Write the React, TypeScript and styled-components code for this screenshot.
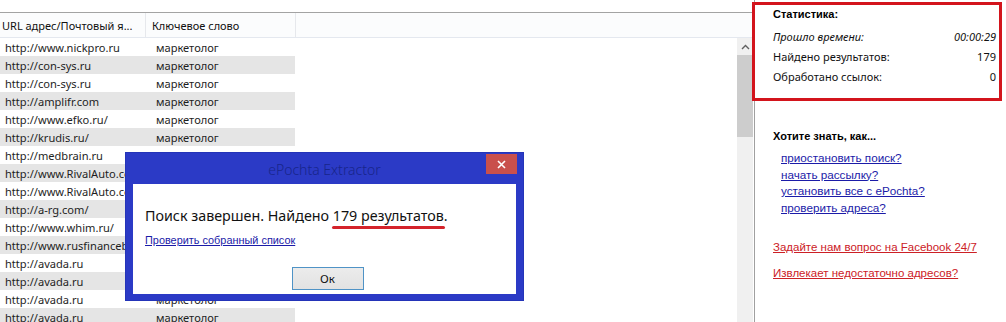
import styled, { createGlobalStyle } from 'styled-components';

const GlobalStyle = createGlobalStyle`
  html, body {
    margin: 0;
    padding: 0;
    background: #ffffff;
    overflow: hidden;
  }
`;

const Window = styled.div`
  position: relative;
  width: 1006px;
  height: 322px;
  display: flex;
  overflow: hidden;
  background: #ffffff;
  font-family: "Noto Sans", "Open Sans", sans-serif;
  color: #1e1e1e;
`;

// Левая часть: список найденных адресов
const ListPane = styled.div`
  width: 754px;
  flex: none;
  display: flex;
  flex-direction: column;
`;

const TopGap = styled.div`
  height: 12px;
  flex: none;
`;

const Grid = styled.div`
  flex: 1;
  display: flex;
  flex-direction: column;
  border-top: 1px solid #a3a3a3;
  margin-right: 1px;
  min-height: 0;
`;

const HeaderRow = styled.div`
  height: 24px;
  flex: none;
  display: flex;
  background: #fbfcfd;
  border-bottom: 1px solid #e4e8ef;
`;

const HeaderCell = styled.div<{ $w: number; $pad: number }>`
  width: ${(p) => p.$w}px;
  flex: none;
  box-sizing: border-box;
  padding-left: ${(p) => p.$pad}px;
  border-right: 1px solid #e6e8ec;
  display: flex;
  align-items: center;
  font-size: 11px;
  color: #111;
  white-space: nowrap;
  overflow: hidden;
`;

const Body = styled.div`
  flex: 1;
  display: flex;
  min-height: 0;
`;

const Rows = styled.div`
  flex: 1;
  overflow: hidden;
`;

const Row = styled.div<{ $shaded: boolean }>`
  width: 295px;
  height: 18px;
  display: flex;
  align-items: center;
  background: ${(p) => (p.$shaded ? '#e5e5e5' : 'transparent')};
  font-size: 11.1px;
`;

const Cell = styled.div<{ $w: number; $pad: number }>`
  width: ${(p) => p.$w}px;
  flex: none;
  box-sizing: border-box;
  padding-left: ${(p) => p.$pad}px;
  white-space: nowrap;
  overflow: hidden;
`;

const Scrollbar = styled.div`
  width: 16px;
  flex: none;
  background: #f0f0f0;
  display: flex;
  flex-direction: column;
`;

const ScrollArrow = styled.div`
  height: 17px;
  display: flex;
  align-items: center;
  justify-content: center;
`;

const ScrollThumb = styled.div`
  height: 82px;
  background: #cdcdcd;
`;

// Правая часть: статистика и подсказки
const SidePane = styled.div`
  flex: 1;
  border-left: 1px solid #a0a0a0;
  display: flex;
  flex-direction: column;
`;

const StatsBox = styled.div`
  margin: 2px 4px 0 -3px;
  height: 99px;
  box-sizing: border-box;
  border: 3px solid #d3141c;
  padding: 1px 3px 0 18px;
  display: flex;
  flex-direction: column;
`;

const Heading = styled.div<{ $top?: number }>`
  font-family: "Liberation Sans", Arial, sans-serif;
  font-weight: bold;
  font-size: 11px;
  color: #000;
  height: 16px;
  line-height: 16px;
  margin-top: ${(p) => p.$top ?? 0}px;
`;

const StatLine = styled.div<{ $italic?: boolean; $first?: boolean }>`
  display: flex;
  justify-content: space-between;
  height: 20px;
  line-height: 20px;
  margin-top: ${(p) => (p.$first ? 5 : 0)}px;
  font-size: 11px;
  color: #111;
  font-style: ${(p) => (p.$italic ? 'italic' : 'normal')};
`;

const HelpBlock = styled.div`
  padding-left: 18px;
  display: flex;
  flex-direction: column;
`;

const HelpList = styled.div`
  padding-left: 8px;
  margin-top: 6px;
  display: flex;
  flex-direction: column;
`;

const HelpLink = styled.a<{ $red?: boolean }>`
  font-family: "Liberation Sans", Arial, sans-serif;
  font-size: ${(p) => (p.$red ? 11.5 : 11.7)}px;
  height: 16.5px;
  line-height: 16px;
  color: ${(p) => (p.$red ? '#cc2026' : '#1b1ba8')};
  text-decoration: underline;
  cursor: pointer;
  white-space: nowrap;
`;

const RedLinks = styled.div`
  margin-top: 23px;
  display: flex;
  flex-direction: column;
  gap: 9px;
`;

// Диалог поверх списка
const Dialog = styled.div`
  position: absolute;
  left: 126px;
  top: 153px;
  width: 397px;
  height: 147px;
  box-sizing: border-box;
  background: #2b3ac6;
  padding: 0 7px 6px 7px;
  display: flex;
  flex-direction: column;
  box-shadow: 0 0 0 1px #2434b8;
`;

const TitleBar = styled.div`
  position: relative;
  height: 31px;
  flex: none;
  display: flex;
  align-items: center;
  justify-content: center;
  font-size: 14px;
  font-weight: 300;
  color: #18258a;
  padding-top: 1px;
  box-sizing: border-box;
`;

const CloseButton = styled.div`
  position: absolute;
  right: -1px;
  top: 1px;
  width: 31px;
  height: 20px;
  background: #c9504c;
  display: flex;
  align-items: center;
  justify-content: center;
`;

const ClientArea = styled.div`
  flex: 1;
  background: #ffffff;
  padding: 21px 12px 0 12px;
  display: flex;
  flex-direction: column;
`;

const Message = styled.div`
  font-size: 14.3px;
  color: #111;
  height: 22px;
  line-height: 22px;
  white-space: nowrap;
`;

const Marked = styled.span`
  position: relative;
  &::after {
    content: '';
    position: absolute;
    left: -1px;
    right: 3px;
    bottom: -4px;
    height: 3px;
    border-radius: 2px;
    background: #d4232b;
  }
`;

const DialogLink = styled.a`
  margin-top: 5px;
  font-family: "Liberation Sans", Arial, sans-serif;
  font-size: 10.9px;
  line-height: 16px;
  color: #1b1ba8;
  text-decoration: underline;
  cursor: pointer;
  align-self: flex-start;
`;

const ButtonRow = styled.div`
  margin-top: 19px;
  display: flex;
  justify-content: center;
  padding-left: 6px;
`;

const OkButton = styled.button`
  width: 72px;
  height: 23px;
  box-sizing: border-box;
  border: 1px solid #4f93c6;
  background: linear-gradient(#ececec, #e2e2e2);
  font-family: "Noto Sans", "Open Sans", sans-serif;
  font-size: 11.5px;
  color: #111;
  padding: 0;
`;

const urls = [
  'http://www.nickpro.ru',
  'http://con-sys.ru',
  'http://con-sys.ru',
  'http://amplifr.com',
  'http://www.efko.ru/',
  'http://krudis.ru/',
  'http://medbrain.ru',
  'http://www.RivalAuto.com',
  'http://www.RivalAuto.com',
  'http://a-rg.com/',
  'http://www.whim.ru/',
  'http://www.rusfinancebank.ru',
  'http://avada.ru',
  'http://avada.ru',
  'http://avada.ru',
  'http://avada.ru',
];

const App = () => {
  return (
    <>
      <GlobalStyle />
      <Window>
        <ListPane>
          <TopGap />
          <Grid>
            <HeaderRow>
              <HeaderCell $w={146} $pad={2}>URL адрес/Почтовый я...</HeaderCell>
              <HeaderCell $w={150} $pad={6}>Ключевое слово</HeaderCell>
            </HeaderRow>
            <Body>
              <Rows>
                {urls.map((u, i) => (
                  <Row key={i} $shaded={i % 2 === 1}>
                    <Cell $w={145} $pad={5}>{u}</Cell>
                    <Cell $w={150} $pad={11}>маркетолог</Cell>
                  </Row>
                ))}
              </Rows>
              <Scrollbar>
                <ScrollArrow>
                  <svg width="9" height="6" viewBox="0 0 9 6">
                    <path d="M1 5 L4.5 1.5 L8 5" fill="none" stroke="#606060" strokeWidth="1.4" />
                  </svg>
                </ScrollArrow>
                <ScrollThumb />
              </Scrollbar>
            </Body>
          </Grid>
        </ListPane>

        <SidePane>
          <StatsBox>
            <Heading>Статистика:</Heading>
            <StatLine $italic $first>
              <span>Прошло времени:</span>
              <span>00:00:29</span>
            </StatLine>
            <StatLine>
              <span>Найдено результатов:</span>
              <span>179</span>
            </StatLine>
            <StatLine>
              <span>Обработано ссылок:</span>
              <span>0</span>
            </StatLine>
          </StatsBox>

          <HelpBlock>
            <Heading $top={27}>Хотите знать, как...</Heading>
            <HelpList>
              <HelpLink>приостановить поиск?</HelpLink>
              <HelpLink>начать рассылку?</HelpLink>
              <HelpLink>установить все с ePochta?</HelpLink>
              <HelpLink>проверить адреса?</HelpLink>
            </HelpList>
            <RedLinks>
              <HelpLink $red>Задайте нам вопрос на Facebook 24/7</HelpLink>
              <HelpLink $red>Извлекает недостаточно адресов?</HelpLink>
            </RedLinks>
          </HelpBlock>
        </SidePane>

        <Dialog>
          <TitleBar>
            ePochta Extractor
            <CloseButton>
              <svg width="9" height="9" viewBox="0 0 9 9">
                <path d="M1 1 L8 8 M8 1 L1 8" stroke="#ffffff" strokeWidth="1.6" />
              </svg>
            </CloseButton>
          </TitleBar>
          <ClientArea>
            <Message>
              Поиск завершен. Найдено <Marked>179 результатов.</Marked>
            </Message>
            <DialogLink>Проверить собранный список</DialogLink>
            <ButtonRow>
              <OkButton>Ок</OkButton>
            </ButtonRow>
          </ClientArea>
        </Dialog>
      </Window>
    </>
  );
};

export default App;
